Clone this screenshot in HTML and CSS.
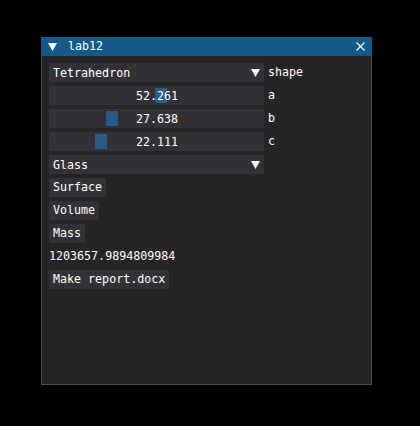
FILE: index.html
```html
<!DOCTYPE html>
<html>
<head>
<meta charset="utf-8">
<link rel="stylesheet" href="styles.css">
</head>
<body>
<div class="window">
  <div class="titlebar">
    <svg class="collapse" width="9" height="8" viewBox="0 0 9 8"><polygon points="0,0 9,0 4.5,8" fill="#fff"/></svg>
    <span class="title">lab12</span>
    <svg class="close" width="9" height="9" viewBox="0 0 9 9"><path d="M0.5 0.5 L8.5 8.5 M8.5 0.5 L0.5 8.5" stroke="#fff" stroke-width="1.1"/></svg>
  </div>
  <div class="content">
    <div class="row">
      <div class="frame combo"><span class="ctext">Tetrahedron</span><span class="arrowbtn"><svg width="9" height="8" viewBox="0 0 9 8"><polygon points="0,0 9,0 4.5,8" fill="#fff"/></svg></span></div>
      <span class="label">shape</span>
    </div>
    <div class="row">
      <div class="frame slider"><span class="grab" style="left:106px"></span><span class="stext">52.261</span></div>
      <span class="label">a</span>
    </div>
    <div class="row">
      <div class="frame slider"><span class="grab" style="left:57px"></span><span class="stext">27.638</span></div>
      <span class="label">b</span>
    </div>
    <div class="row">
      <div class="frame slider"><span class="grab" style="left:46px"></span><span class="stext">22.111</span></div>
      <span class="label">c</span>
    </div>
    <div class="row">
      <div class="frame combo"><span class="ctext">Glass</span><span class="arrowbtn"><svg width="9" height="8" viewBox="0 0 9 8"><polygon points="0,0 9,0 4.5,8" fill="#fff"/></svg></span></div>
    </div>
    <div class="row"><span class="button">Surface</span></div>
    <div class="row"><span class="button">Volume</span></div>
    <div class="row"><span class="button">Mass</span></div>
    <div class="row"><span class="text">1203657.9894809984</span></div>
    <div class="row"><span class="button">Make report.docx</span></div>
  </div>
</div>
</body>
</html>
```
FILE: styles.css
```css
html, body {
  margin: 0;
  padding: 0;
  background: #000;
}
body {
  font-family: "DejaVu Sans Mono", "Liberation Mono", monospace;
  font-size: 11.67px;
  color: #fff;
  padding: 37px 0 0 41px;
}
.window {
  box-sizing: border-box;
  width: 331px;
  height: 348px;
  border: 1px solid #4e4e4e;
  background: #252525;
  display: flex;
  flex-direction: column;
}
.titlebar {
  margin: -1px -1px 0 -1px;
  height: 19px;
  background: #135a8b;
  display: flex;
  align-items: center;
  position: relative;
}
.collapse {
  margin-left: 7px;
  margin-top: 1px;
}
.title {
  margin-left: 11px;
  line-height: 19px;
}
.close {
  margin-left: auto;
  margin-right: 7px;
}
.content {
  padding: 7px 7px 0 7px;
  display: flex;
  flex-direction: column;
  gap: 4px;
}
.row {
  display: flex;
  align-items: center;
  height: 19px;
  gap: 4px;
}
.frame {
  box-sizing: border-box;
  width: 215px;
  height: 19px;
  background: #323236;
  position: relative;
  display: flex;
  align-items: center;
}
.combo .ctext {
  padding-left: 4px;
  flex: 1;
}
.arrowbtn {
  width: 19px;
  height: 19px;
  display: flex;
  align-items: center;
  justify-content: center;
}
.arrowbtn svg {
  margin-left: 1px;
}
.label {
  line-height: 19px;
}
.slider {
  justify-content: center;
}
.grab {
  position: absolute;
  top: 2px;
  width: 12px;
  height: 15px;
  background: #2a5b86;
}
.stext {
  position: relative;
  margin-left: 1px;
}
.button {
  background: #323236;
  height: 19px;
  line-height: 19px;
  padding: 0 4px;
}
.text {
  line-height: 19px;
}
```
